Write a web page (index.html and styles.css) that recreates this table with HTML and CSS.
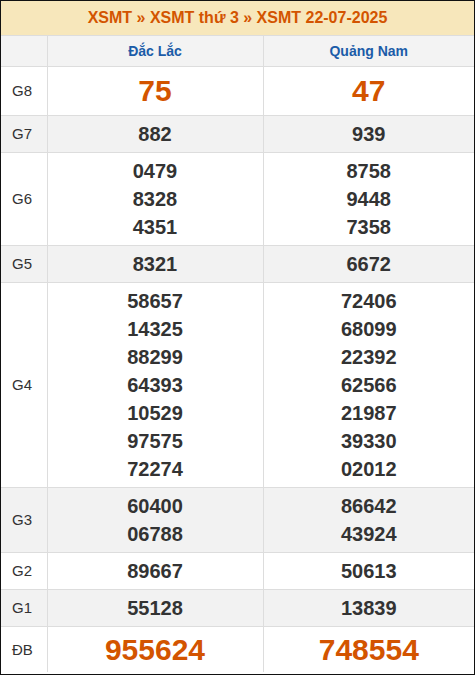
FILE: index.html
```html
<!DOCTYPE html>
<html>
<head>
<meta charset="utf-8">
<link rel="stylesheet" href="styles.css">
</head>
<body>
<div class="box">
<table class="kq">
<colgroup><col class="c1"><col class="c2"><col class="c3"></colgroup>
<tr><th class="title" colspan="3">XSMT » XSMT thứ 3 » XSMT 22-07-2025</th></tr>
<tr class="prov"><th class="lbl"></th><th>Đắc Lắc</th><th>Quảng Nam</th></tr>
<tr class="big"><td class="lbl">G8</td><td>75</td><td>47</td></tr>
<tr class="alt"><td class="lbl">G7</td><td>882</td><td>939</td></tr>
<tr><td class="lbl">G6</td><td><div>0479</div><div>8328</div><div>4351</div></td><td><div>8758</div><div>9448</div><div>7358</div></td></tr>
<tr class="alt"><td class="lbl">G5</td><td>8321</td><td>6672</td></tr>
<tr><td class="lbl">G4</td><td><div>58657</div><div>14325</div><div>88299</div><div>64393</div><div>10529</div><div>97575</div><div>72274</div></td><td><div>72406</div><div>68099</div><div>22392</div><div>62566</div><div>21987</div><div>39330</div><div>02012</div></td></tr>
<tr class="alt"><td class="lbl">G3</td><td><div>60400</div><div>06788</div></td><td><div>86642</div><div>43924</div></td></tr>
<tr><td class="lbl">G2</td><td>89667</td><td>50613</td></tr>
<tr class="alt"><td class="lbl">G1</td><td>55128</td><td>13839</td></tr>
<tr class="big db"><td class="lbl">ĐB</td><td>955624</td><td>748554</td></tr>
</table>
</div>
</body>
</html>
```
FILE: styles.css
```css
html, body { margin: 0; padding: 0; background: #fff; }
body { font-family: "Liberation Sans", Arial, sans-serif; }
.box { width: 473px; height: 673px; border: 1px solid #111; overflow: hidden; }
.kq { width: 473px; border-collapse: collapse; table-layout: fixed; }
.c1 { width: 46px; }
.c2 { width: 216px; }
.c3 { width: 211px; }
.kq td, .kq th { border: 1px solid #ddd; padding: 4px 0; text-align: center; }
.kq tr:first-of-type th { border-top: none; }
.kq td:first-child, .kq th:first-child { border-left: none; }
.kq td:last-child, .kq th:last-child { border-right: none; }
.kq tr:last-child td { border-bottom: none; }
.title { background: #f7e7bb; color: #d35400; font-size: 16px; font-weight: bold; line-height: 18px; height: 26px; padding: 4px 0 !important; }
.prov th { background: #f3f3f3; color: #1b5ca8; font-size: 14px; font-weight: bold; line-height: 22px; }
.kq td { color: #333; font-size: 20px; font-weight: bold; line-height: 28px; }
.kq td.lbl { font-size: 15px; font-weight: normal; text-align: left; padding-left: 11px; color: #333; }
.alt td { background: #f2f2f2; }
.big td { color: #d35400; font-size: 30px; line-height: 40px; }
.db td { line-height: 37px; }
```
